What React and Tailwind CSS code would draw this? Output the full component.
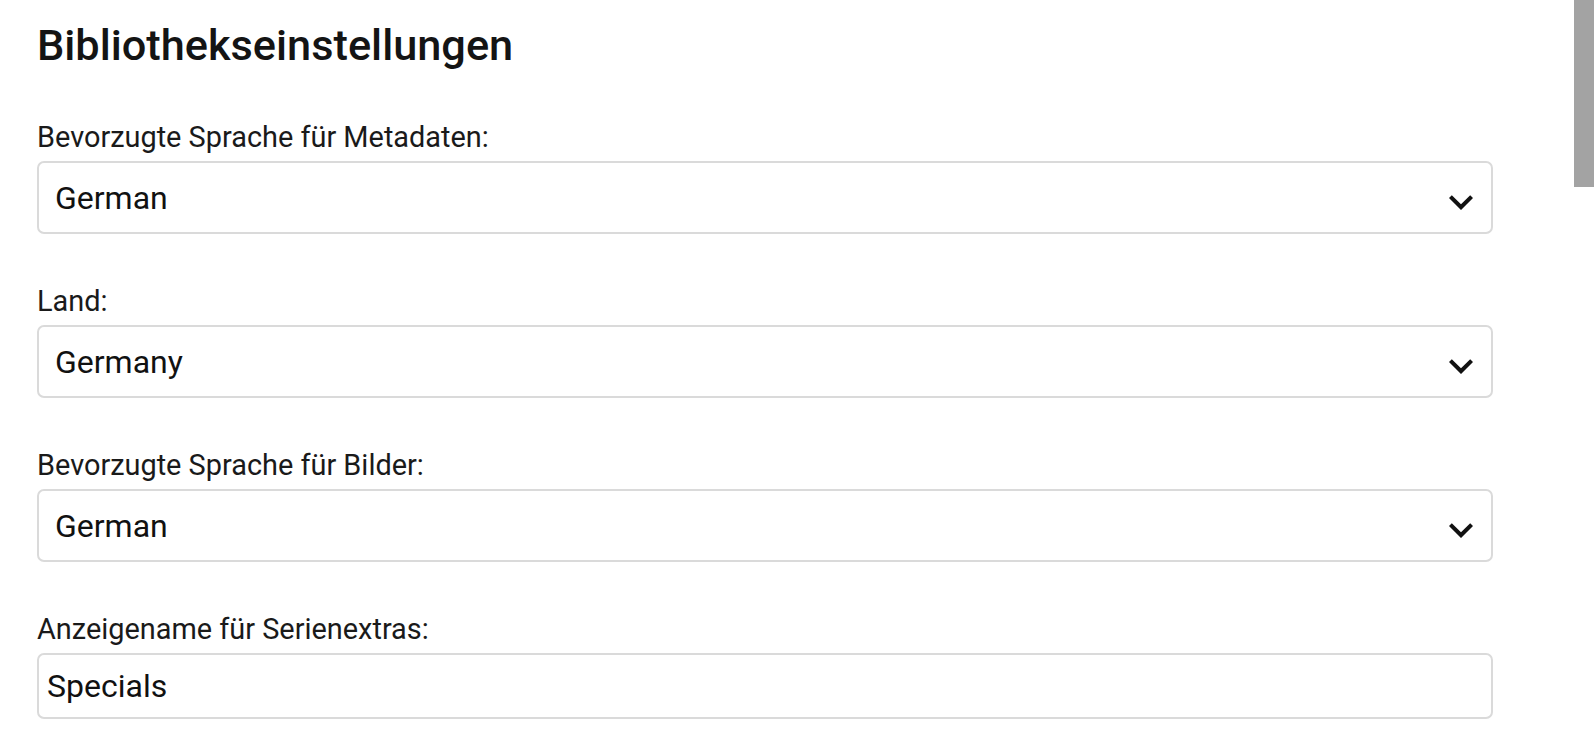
import React from "react";

function Chevron() {
  return (
    <svg width="48" height="48" viewBox="0 0 24 24" className="pointer-events-none absolute right-[8px] top-[17px]">
      <path d="M16.59 8.59L12 13.17 7.41 8.59 6 10l6 6 6-6z" fill="#111" />
    </svg>
  );
}

function SelectField({ label, value }) {
  return (
    <div className="mb-[52px]">
      <label className="block text-[28.9px] leading-[31px] mb-[8px] text-[#1a1a1a]">{label}</label>
      <div className="relative">
        <select
          defaultValue={value}
          className="block w-full h-[73px] appearance-none rounded-[7px] border-2 border-[#dadada] bg-white pl-[16px] pr-[60px] text-[32px] text-[#111] outline-none"
          style={{ fontFamily: "Roboto, sans-serif" }}
        >
          <option>{value}</option>
        </select>
        <Chevron />
      </div>
    </div>
  );
}

export default function App() {
  return (
    <div className="relative min-h-[744px] w-full overflow-hidden bg-white" style={{ fontFamily: "Roboto, 'Noto Sans', sans-serif" }}>
      <div className="w-[1456px] ml-[37px] pt-[21px]">
        <h2 className="text-[43.3px] leading-[49px] font-medium text-[#141414] mb-[52px]">Bibliothekseinstellungen</h2>
        <SelectField label="Bevorzugte Sprache für Metadaten:" value="German" />
        <SelectField label="Land:" value="Germany" />
        <SelectField label="Bevorzugte Sprache für Bilder:" value="German" />
        <div>
          <label className="block text-[28.9px] leading-[31px] mb-[8px] text-[#1a1a1a]">Anzeigename für Serienextras:</label>
          <input
            defaultValue="Specials"
            className="block w-full h-[66px] rounded-[7px] border-2 border-[#dadada] bg-white px-[8px] text-[32px] text-[#111] outline-none"
            style={{ fontFamily: "Roboto, sans-serif" }}
          />
        </div>
      </div>
      <div className="absolute right-0 top-0 w-[20px] h-[187px] bg-[#a3a3a3]" />
    </div>
  );
}
